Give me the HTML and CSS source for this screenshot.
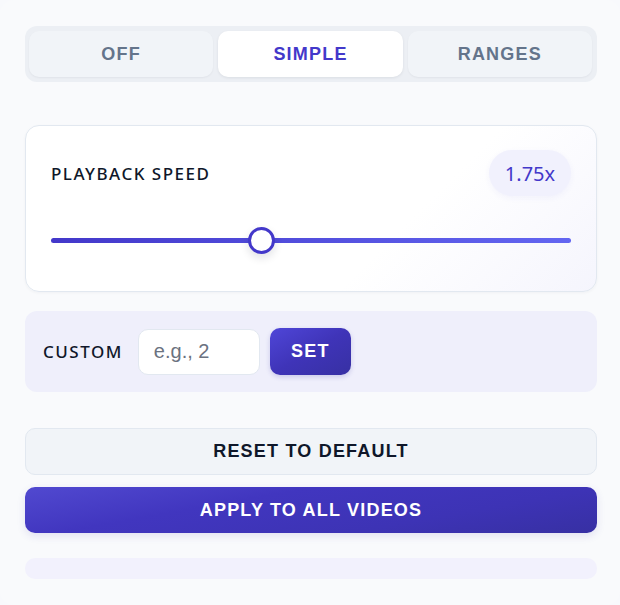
FILE: index.html
```html
<!DOCTYPE html>
<html>
<head>
<meta charset="utf-8">
<link rel="stylesheet" href="styles.css">
</head>
<body>
<div class="panel">
  <div class="tabs">
    <button class="tab">OFF</button>
    <button class="tab active">SIMPLE</button>
    <button class="tab">RANGES</button>
  </div>

  <div class="card">
    <div class="card-head">
      <span class="label">PLAYBACK SPEED</span>
      <span class="badge">1.75x</span>
    </div>
    <div class="slider">
      <div class="track"></div>
      <div class="thumb" style="left: 40.3%"></div>
    </div>
  </div>

  <div class="custom">
    <span class="label">CUSTOM</span>
    <input class="input" type="text" placeholder="e.g., 2">
    <button class="btn-set">SET</button>
  </div>

  <button class="btn-reset">RESET TO DEFAULT</button>
  <button class="btn-apply">APPLY TO ALL VIDEOS</button>

  <div class="footer-bar"></div>
</div>
</body>
</html>
```

FILE: styles.css
```css
* { box-sizing: border-box; }

html, body {
  margin: 0;
  padding: 0;
  background: #f8f9fc;
  height: 100%;
}

body {
  font-family: "Liberation Sans", Arial, sans-serif;
}

.panel {
  width: 620px;
  min-height: 605px;
  padding: 26px 23px 0 25px;
  display: flex;
  flex-direction: column;
  background: #f9fafc;
  border-radius: 14px;
}

button {
  font-family: "Liberation Sans", Arial, sans-serif;
  cursor: pointer;
}

.tabs {
  display: flex;
  gap: 5px;
  padding: 5px 5px 5px 4px;
  background: #eceff4;
  border-radius: 12px;
  height: 56px;
}

.tab {
  flex: 1;
  border: none;
  border-radius: 10px;
  background: #f1f4f8;
  color: #64748b;
  font-size: 18px;
  font-weight: 700;
  letter-spacing: 1.2px;
  box-shadow: 0 1px 2px rgba(15, 23, 42, 0.05);
}

.tab.active {
  background: #ffffff;
  color: #4338ca;
  box-shadow: 0 1px 3px rgba(15, 23, 42, 0.08);
}

.card {
  margin-top: 43px;
  height: 167px;
  border: 1px solid #e2e8f0;
  border-radius: 14px;
  background: linear-gradient(135deg, #ffffff 65%, #f5f5fd 100%);
  padding: 24px 25px 0 25px;
  box-shadow: 0 1px 3px rgba(15, 23, 42, 0.04);
}

.card-head {
  display: flex;
  justify-content: space-between;
  align-items: center;
  height: 46px;
}

.label {
  font-family: "Noto Sans", "Open Sans", sans-serif;
  font-size: 17px;
  font-weight: 500;
  letter-spacing: 1.5px;
  color: #0f172a;
}

.badge {
  width: 82px;
  height: 46px;
  border-radius: 23px;
  background: #f1f1fd;
  color: #4338ca;
  font-family: "Noto Sans", "Open Sans", sans-serif;
  font-size: 20px;
  display: flex;
  align-items: center;
  justify-content: center;
  box-shadow: 0 2px 6px rgba(67, 56, 202, 0.05);
}

.slider {
  position: relative;
  margin-top: 31px;
  height: 26px;
  display: flex;
  align-items: center;
}

.track {
  width: 100%;
  height: 5px;
  border-radius: 3px;
  background: linear-gradient(90deg, #4338ca, #6366f1);
}

.thumb {
  position: absolute;
  top: 0;
  width: 27px;
  height: 27px;
  margin-left: -13px;
  border-radius: 50%;
  background: #ffffff;
  border: 3px solid #4338ca;
  box-shadow: 0 4px 8px rgba(15, 23, 42, 0.12);
}

.custom {
  margin-top: 19px;
  height: 81px;
  border-radius: 12px;
  background: #efeffb;
  display: flex;
  align-items: center;
  padding: 0 18px;
}

.custom .label {
  margin-right: 15px;
}

.input {
  width: 122px;
  height: 46px;
  border: 1px solid #e2e8f0;
  border-radius: 10px;
  background: #ffffff;
  font-family: "Liberation Sans", Arial, sans-serif;
  font-size: 20px;
  padding: 0 15px;
  outline: none;
}

.input::placeholder {
  color: #6b7280;
}

.btn-set {
  margin-left: 10px;
  width: 81px;
  height: 47px;
  border: none;
  border-radius: 10px;
  background: linear-gradient(150deg, #4f46d8 0%, #3f34b8 50%, #3730a3 100%);
  color: #ffffff;
  font-size: 18px;
  font-weight: 700;
  letter-spacing: 1.2px;
  box-shadow: 0 2px 5px rgba(55, 48, 163, 0.2);
}

.btn-reset {
  margin-top: 36px;
  height: 47px;
  width: 100%;
  border: 1px solid #e2e8f0;
  border-radius: 10px;
  background: #f1f4f8;
  color: #0f172a;
  font-size: 18px;
  font-weight: 700;
  letter-spacing: 1.2px;
}

.btn-apply {
  margin-top: 12px;
  height: 46px;
  width: 100%;
  border: none;
  border-radius: 10px;
  background: linear-gradient(170deg, #5149d0 0%, #4136bf 35%, #3d33b5 70%, #3730a3 100%);
  color: #ffffff;
  font-size: 18px;
  font-weight: 700;
  letter-spacing: 1.2px;
  box-shadow: 0 3px 8px rgba(55, 48, 163, 0.12);
}

.footer-bar {
  margin-top: 25px;
  height: 21px;
  border-radius: 10px;
  background: #f2f1fd;
}
```
